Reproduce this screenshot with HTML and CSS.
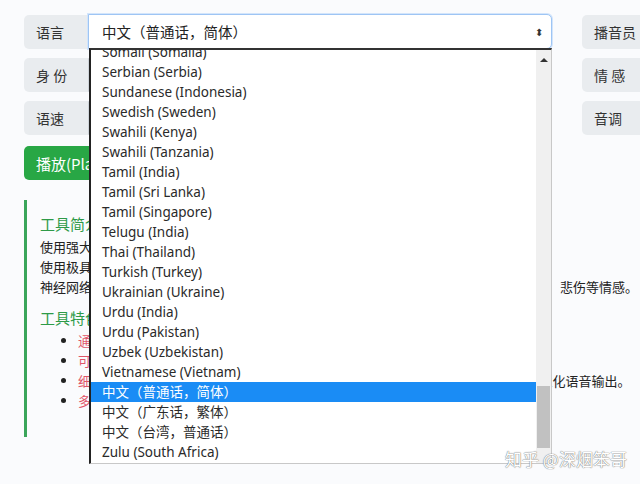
FILE: index.html
```html
<!DOCTYPE html>
<html lang="zh">
<head>
  <meta charset="UTF-8">
  <title>语音合成</title>
  <link rel="stylesheet" href="styles.css">
</head>
<body>
<div class="page">
  <div class="form-grid">
    <span class="label">语言</span>
    <div class="select focus"><span>中文（普通话，简体）</span><span class="caret">&#x2B0D;</span></div>
    <span class="label">播音员</span>
    <div class="select"></div>

    <span class="label">身 份</span>
    <div class="select"></div>
    <span class="label">情 感</span>
    <div class="select"></div>

    <span class="label">语速</span>
    <div class="select"></div>
    <span class="label">音调</span>
    <div class="select"></div>
  </div>

  <button class="play">播放(Play)</button>

  <div class="card">
    <h4>工具简介</h4>
    <p>使用强大的微软语音合成服务，将文本转换为自然流畅的语音。<br>
      使用极具表现力的神经网络声音，打造更加真实的语音体验。<br>
      神经网络语音合成技术，支持一百多种语言和方言的四百多种声音，并可模拟开心、愤怒、悲伤等情感。</p>
    <h4>工具特色</h4>
    <ul>
      <li><span class="em">通过浏览器直接使用:</span> 无需安装任何软件</li>
      <li><span class="em">可调节参数:</span> 语速、音调等均可自由设置</li>
      <li><span class="em">细腻的情感表达:</span> 支持多种说话风格与角色扮演，满足各种场景需求，实现更加个性化语音输出。</li>
      <li><span class="em">多种语言:</span> 多种语言与播音员可供选择</li>
    </ul>
  </div>

  <div class="dropdown">
    <div class="options">
      <div class="opt">Somali (Somalia)</div>
      <div class="opt">Serbian (Serbia)</div>
      <div class="opt">Sundanese (Indonesia)</div>
      <div class="opt">Swedish (Sweden)</div>
      <div class="opt">Swahili (Kenya)</div>
      <div class="opt">Swahili (Tanzania)</div>
      <div class="opt">Tamil (India)</div>
      <div class="opt">Tamil (Sri Lanka)</div>
      <div class="opt">Tamil (Singapore)</div>
      <div class="opt">Telugu (India)</div>
      <div class="opt">Thai (Thailand)</div>
      <div class="opt">Turkish (Turkey)</div>
      <div class="opt">Ukrainian (Ukraine)</div>
      <div class="opt">Urdu (India)</div>
      <div class="opt">Urdu (Pakistan)</div>
      <div class="opt">Uzbek (Uzbekistan)</div>
      <div class="opt">Vietnamese (Vietnam)</div>
      <div class="opt selected">中文（普通话，简体）</div>
      <div class="opt">中文（广东话，繁体）</div>
      <div class="opt">中文（台湾，普通话）</div>
      <div class="opt">Zulu (South Africa)</div>
    </div>
    <div class="scrollbar">
      <span class="arrow-up"></span>
      <span class="thumb"></span>
    </div>
  </div>

  <div class="watermark">知乎 @深烟笨哥</div>
</div>
</body>
</html>
```

FILE: styles.css
```css
html, body {
  margin: 0;
  padding: 0;
  overflow: hidden;
  background: #fafbfd;
}
body {
  font-family: "Noto Sans", "Noto Sans CJK SC", sans-serif;
  color: #212529;
}
.page {
  position: relative;
  width: 760px;
  height: 484px;
  padding: 15px 0 0 24px;
  box-sizing: border-box;
}
.form-grid {
  display: grid;
  grid-template-columns: 64px 464px 100px 120px;
  grid-auto-rows: 34px;
  row-gap: 9px;
}
.label {
  display: flex;
  align-items: center;
  padding-left: 12px;
  background: #e9ecef;
  border-radius: 5px 0 0 5px;
  font-family: "Noto Sans CJK SC", sans-serif;
  font-size: 14px;
  color: #333;
}
.form-grid .label:nth-child(4n+3) {
  margin-left: 30px;
}
.select {
  display: flex;
  align-items: center;
  justify-content: space-between;
  padding: 0 8px 0 13px;
  background: #fff;
  border: 1px solid #ced4da;
  border-radius: 0 5px 5px 0;
  font-family: "Noto Sans CJK SC", sans-serif;
  font-size: 14.5px;
  color: #222;
}
.select.focus {
  margin-top: -1px;
  border-color: #9ec5f4;
  box-shadow: 0 0 0 1px #d3e5fb;
}
.caret {
  font-size: 10px;
  color: #333;
}
.play {
  margin-top: 11px;
  height: 34px;
  padding: 0 12px;
  background: #28a745;
  color: #fff;
  border: none;
  border-radius: 5px;
  font-family: "Noto Sans CJK SC", sans-serif;
  font-size: 15px;
}
.card {
  margin-top: 20px;
  height: 237px;
  padding: 11px 0 0 13px;
  border-left: 3px solid #3aa55a;
  box-sizing: border-box;
  font-family: "Noto Sans CJK SC", sans-serif;
  font-size: 13px;
  line-height: 20px;
  color: #222;
}
.card h4 {
  margin: 0;
  font-size: 15px;
  font-weight: normal;
  line-height: 26px;
  color: #2e9a48;
}
.card p {
  margin: 0 0 8px;
  white-space: nowrap;
}
.card ul {
  margin: 0;
  padding-left: 38px;
  white-space: nowrap;
}
.card .em {
  color: #e0566a;
}
.dropdown {
  position: absolute;
  left: 89px;
  top: 48px;
  width: 463px;
  height: 416px;
  display: flex;
  background: #fff;
  border-top: 2px solid #333;
  border-left: 2px solid #222;
  border-right: 1px solid #c8c8c8;
  border-bottom: 1px solid #c8c8c8;
  box-sizing: border-box;
  overflow: hidden;
}
.options {
  flex: 1;
  margin-top: -8px;
  font-size: 13.5px;
  color: #2a2a2a;
}
.opt {
  height: 20px;
  line-height: 20px;
  padding-left: 11px;
  font-family: "Noto Sans", "Noto Sans CJK SC", sans-serif;
}
.opt.selected {
  background: #1a8cf5;
  color: #fff;
}
.scrollbar {
  position: relative;
  width: 15px;
  background: #f0f0f0;
}
.arrow-up {
  position: absolute;
  left: 4px;
  top: 8px;
  border-left: 4px solid transparent;
  border-right: 4px solid transparent;
  border-bottom: 4px solid #333;
}
.thumb {
  position: absolute;
  left: 1px;
  right: 1px;
  top: 336px;
  height: 62px;
  background: #c1c1c1;
}
.watermark {
  position: absolute;
  left: 505px;
  top: 446px;
  font-family: "Noto Sans CJK SC", sans-serif;
  font-size: 17px;
  color: #fff;
  text-shadow: 0 0 1px #777, 0 0 1px #777;
}
```
